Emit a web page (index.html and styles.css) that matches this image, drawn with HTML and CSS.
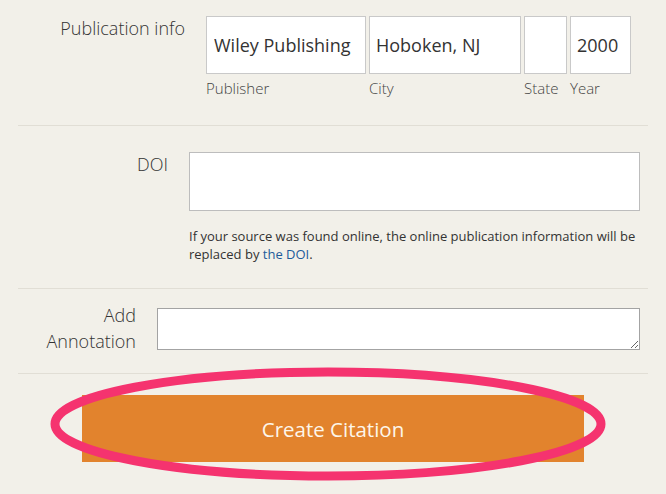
FILE: index.html
```html
<!DOCTYPE html>
<html lang="en">
<head>
<meta charset="UTF-8" />
<meta name="viewport" content="width=device-width, initial-scale=1.0"/>
<title>Create Citation</title>
<link rel="stylesheet" href="styles.css">
</head>
<body>
<div class="form">

  <div class="row row-pub">
    <label class="label">Publication info</label>
    <div class="fields">
      <div class="field f-publisher">
        <input type="text" value="Wiley Publishing" />
        <span class="sub">Publisher</span>
      </div>
      <div class="field f-city">
        <input type="text" value="Hoboken, NJ" />
        <span class="sub">City</span>
      </div>
      <div class="field f-state">
        <input type="text" value="" />
        <span class="sub">State</span>
      </div>
      <div class="field f-year">
        <input type="text" value="2000" />
        <span class="sub">Year</span>
      </div>
    </div>
  </div>

  <div class="row row-doi">
    <label class="label">DOI</label>
    <div class="fields-col">
      <input type="text" class="doi-input" />
      <p class="help">If your source was found online, the online publication information will be replaced by <a href="#">the DOI</a>.</p>
    </div>
  </div>

  <div class="row row-note">
    <label class="label">Add Annotation</label>
    <textarea class="note-input"></textarea>
  </div>

  <div class="submit">
    <button class="create-btn">Create Citation</button>
    <svg class="circle" width="560" height="120" viewBox="0 0 560 120">
      <ellipse cx="278" cy="58" rx="273" ry="52" fill="none" stroke="#f5336f" stroke-width="9" />
    </svg>
  </div>

</div>
</body>
</html>
```

FILE: styles.css
```css
body {
  margin: 0;
  background-color: #f2f0e9;
  font-family: 'Open Sans', sans-serif;
  color: #333;
}

.form {
  padding: 0 18px;
}

.row {
  display: flex;
  align-items: flex-start;
  border-bottom: 1px solid #e1ded5;
}

.label {
  text-align: right;
  padding-right: 21px;
  box-sizing: border-box;
  font-size: 18px;
  font-weight: 300;
  line-height: 25px;
  color: #333;
  flex-shrink: 0;
}

input, textarea {
  font-family: 'Open Sans', sans-serif;
  box-sizing: border-box;
  background-color: #fff;
  border: 1px solid #c9c9c9;
  margin: 0;
}

/* publication info */
.row-pub {
  padding: 16px 0 26px;
}

.row-pub .label {
  width: 188px;
}

.fields {
  display: flex;
  gap: 3px;
}

.field {
  display: flex;
  flex-direction: column;
}

.field input {
  height: 58px;
  width: 100%;
  font-size: 18px;
  color: #333;
  padding: 0 6px;
}

.f-publisher { width: 160px; }
.f-city { width: 152px; }
.f-state { width: 43px; }
.f-year { width: 61px; }

.f-publisher input { padding-left: 7px; }

.sub {
  font-size: 15px;
  font-weight: 300;
  color: #444;
  margin-top: 3px;
  line-height: 22px;
  white-space: nowrap;
}

/* doi */
.row-doi {
  padding: 26px 0 25px;
}

.row-doi .label {
  width: 171px;
}

.fields-col {
  flex: 1;
  padding-right: 8px;
}

.doi-input {
  display: block;
  width: 100%;
  height: 59px;
  border-color: #bdbdbd;
}

.help {
  margin: 16px 0 0;
  font-size: 13px;
  line-height: 18px;
  color: #333;
}

.help a {
  color: #1d5b9a;
  text-decoration: none;
}

/* annotation */
.row-note {
  padding: 19px 0 19px;
}

.row-note .label {
  width: 139px;
  line-height: 26px;
  margin-top: -6px;
  padding-left: 20px;
}

.note-input {
  display: block;
  flex: 1;
  margin-right: 8px;
  height: 42px;
  border-color: #a3a3a3;
  resize: vertical;
}

/* submit */
.submit {
  position: relative;
  display: flex;
  justify-content: center;
  padding: 21px 0 32px;
}

.create-btn {
  width: 502px;
  height: 67px;
  border: none;
  background-color: #e2832d;
  color: #fdf6ea;
  font-family: 'Open Sans', sans-serif;
  font-size: 20.5px;
  cursor: pointer;
}

.circle {
  position: absolute;
  left: 32px;
  top: -8px;
}
```
